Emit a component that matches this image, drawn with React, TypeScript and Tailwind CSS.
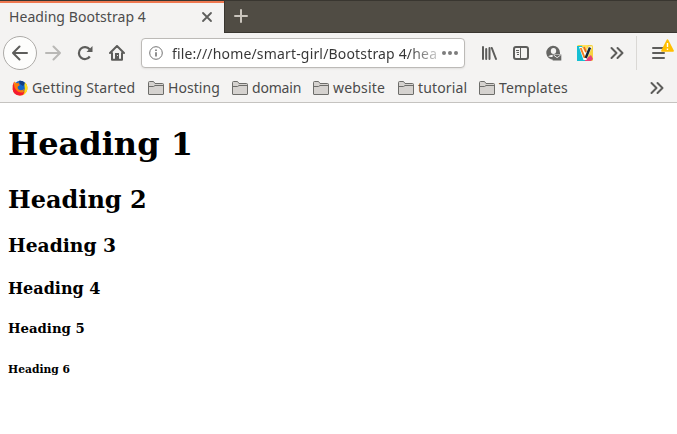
import React from 'react';

const uiFont = "font-['Noto_Sans','Open_Sans',sans-serif]";

function Chevrons() {
  return (
    <svg width="14" height="14" viewBox="0 0 14 14" fill="none" stroke="#5d5d5b" strokeWidth="2" strokeLinecap="round" strokeLinejoin="round">
      <path d="M1.5 2l5 5-5 5M7.5 2l5 5-5 5" />
    </svg>
  );
}

function Folder() {
  return (
    <svg width="16" height="16" viewBox="0 0 16 16" fill="#d5d2cf" stroke="#6d6d6a" className="shrink-0">
      <path d="M.5 14V2.5Q.5 1.5 1.5 1.5H5.5L7 3.5H14.5Q15.5 3.5 15.5 4.5V14Q15.5 14.5 15 14.5H1Q.5 14.5.5 14Z" />
      <path d="M1 6.5H5.5L7 5.5H15" fill="none" />
    </svg>
  );
}

function Firefox() {
  return (
    <svg width="16" height="16" viewBox="0 0 16 16" className="shrink-0">
      <circle cx="8.3" cy="7.4" r="6.6" fill="#1467c8" />
      <path d="M7 .8Q10.5 0 13 3L11 6 8 4Z" fill="#143f83" />
      <path d="M2.2 1.5Q1 4.500 1.500 7.500L4 11.500Q8 14 12 11 14.500 7 13 2.500 16 5.500 15.300 9.500 13.800 15.500 8 15.500 1.600 15.200.7 9.500.3 4.300 2.200 1.500Z" fill="#ff8a00" />
      <path d="M2.200 1.500Q3.600 3 5.200 3.300L6.800 2.600Q6.200 4.200 8 5L5.800 6.500Q5 9.500 8.500 10.300 10.500 10.500 12 9 11.500 12.500 8.500 13 3.500 12.500 2 8.500Z" fill="#ff7a08" />
      <path d="M2.200 1.500Q1.300 6 3.500 9 6 13 10.500 12.500 13 12 13.700 10 13.500 12.800 11 14.700 9 15.700 7.500 15.500 1.500 15 .7 9.500.3 4.300 2.200 1.500Z" fill="#f51a31" />
      <path d="M13 2.500Q16 5.500 15.300 9.500 14.500 13.500 11 14.900 13.300 11.500 12.800 8.500 11.800 5 13 2.500Z" fill="#ffe11b" />
    </svg>
  );
}

const bookmarks = [
  { label: 'Hosting', box: 'w-[84px]', text: 'tracking-[0.05px]' },
  { label: 'domain', box: 'w-[81px]', text: 'tracking-[-0.2px]' },
  { label: 'website', box: 'w-[85px]', text: 'tracking-[0.18px]' },
  { label: 'tutorial', box: 'w-[81px]', text: 'tracking-[0.15px]' },
  { label: 'Templates', box: 'w-[100px]', text: 'tracking-[0.16px]' },
];

function TabBar() {
  return (
    <div className="flex h-[33px] bg-[#504c44]">
      <div className="flex h-[33px] w-[224px] shrink-0 items-center border-t border-[#393630] bg-[#f4f3f2] pr-[11px] pl-[9px] shadow-[inset_0_2px_0_#ef7850]">
        <span className="flex-1 pb-[2px] text-[14px] tracking-[0.06px] whitespace-nowrap text-[#4c4c4c]">Heading Bootstrap 4</span>
        <svg width="12" height="12" viewBox="0 0 12 12" stroke="#5e5e5c" strokeWidth="1.8" strokeLinecap="round">
          <path d="M2 2l8 8M10 2l-8 8" />
        </svg>
      </div>
      <div className="flex flex-1 border-t border-b border-l border-[#393630] pt-[8px] pl-[9px]">
        <svg width="14" height="14" viewBox="0 0 14 14" stroke="#cac5bd" strokeWidth="2" strokeLinecap="round">
          <path d="M7 1v12M1 7h12" />
        </svg>
      </div>
    </div>
  );
}

function Toolbar() {
  return (
    <div className="flex h-10 items-center bg-[#f4f3f2]">
      <div className="ml-[3px] flex size-[34px] shrink-0 items-center justify-center rounded-full border border-[#adaba8] bg-[#fdfdfc]">
        <svg width="16" height="16" viewBox="0 0 16 16" fill="none" stroke="#5d5d5b" strokeWidth="2" strokeLinecap="round" strokeLinejoin="round">
          <path d="M15 8H1M7.5 1.5L1 8l6.5 6.5" />
        </svg>
      </div>
      <svg className="ml-2 shrink-0" width="16" height="16" viewBox="0 0 16 16" fill="none" stroke="#b9b8b6" strokeWidth="2" strokeLinecap="round" strokeLinejoin="round">
        <path d="M1 8h14M8.5 1.5L15 8l-6.5 6.5" />
      </svg>
      <svg className="ml-4 shrink-0" width="16" height="16" viewBox="0 0 16 16" fill="none" stroke="#5d5d5b" strokeWidth="2.2">
        <path d="M12.8 11.5A6 6 0 1 1 12.6 4.3" />
        <path d="M15.5 1v6h-6z" fill="#5d5d5b" stroke="none" />
      </svg>
      <svg className="ml-4 shrink-0" width="16" height="16" viewBox="0 0 16 16" fill="none" stroke="#5d5d5b" strokeWidth="2" strokeLinecap="round" strokeLinejoin="round">
        <path d="M1 8L8 1l7 7M3 8v6.7h10V8" />
        <path d="M6 14V8h4v6z" fill="#5d5d5b" stroke="none" />
        <path d="M8.5 10.5h.1" stroke="#f4f3f2" strokeWidth="1" />
      </svg>
      <div className="ml-4 flex h-[30px] w-[324px] shrink-0 items-center rounded-[4px] border border-[#bcbab7] bg-white pl-[7px] shadow-[0_1px_2px_rgba(0,0,0,0.08)]">
        <svg width="14" height="14" viewBox="0 0 14 14" className="shrink-0" fill="none" stroke="#737373">
          <circle cx="7" cy="7" r="6.3" />
          <path d="M7 6.2V10.5M7 3.5V5" strokeWidth="1.6" />
        </svg>
        <span className="mt-px ml-[9px] w-[266px] shrink-0 bg-[linear-gradient(90deg,#353535_89%,transparent_103%)] bg-clip-text text-[14px] leading-5 tracking-[0.17px] whitespace-nowrap text-transparent">file:///home/smart-girl/Bootstrap 4/hea</span>
        <svg width="16" height="4" viewBox="0 0 16 4" fill="#7d7d7d" className="ml-[4px] shrink-0">
          <circle cx="2" cy="2" r="2" /><circle cx="8" cy="2" r="2" /><circle cx="14" cy="2" r="2" />
        </svg>
      </div>
      <svg className="ml-4 shrink-0" width="16" height="16" viewBox="0 0 16 16" fill="none" stroke="#5d5d5b" strokeWidth="2" strokeLinecap="round">
        <path d="M2 2v12M5.2 4v10M8.5 3v11M10.8 3L15 14" />
      </svg>
      <svg className="ml-4 shrink-0" width="16" height="16" viewBox="0 0 16 16" fill="none" stroke="#5d5d5b">
        <rect x="1" y="2" width="14" height="12" rx="2" strokeWidth="2" />
        <path d="M7.5 3v10" strokeWidth="1" /><path d="M3 5.5h3M3.5 7.5h2.5M4 9.5h2" />
      </svg>
      <svg className="ml-4 shrink-0" width="17" height="16" viewBox="0 0 17 16">
        <path d="M7.8.8a7 7 0 1 0 1 14V9H15V8A7 7 0 0 0 7.800.8Z" fill="#666664" />
        <ellipse cx="8.500" cy="6" rx="2.700" ry="3" fill="#f4f3f2" />
        <path d="M3.200 11.300Q5 9.800 8 9.700V11.800Q5 12.500 3.200 11.300Z" fill="#f4f3f2" />
        <path d="M7.700 9.500h8.600v6H7.700z" fill="#666664" />
        <path d="M8.500 10l3.600 2.700 3.600-2.700" fill="none" stroke="#f4f3f2" strokeWidth=".9" />
      </svg>
      <svg className="ml-[15px] shrink-0" width="16" height="16" viewBox="0 0 16 16">
        <rect width="16" height="16" rx="1.5" fill="#f7d341" />
        <path d="M0 1h5l4 15H0z" fill="#15bfd3" />
        <path d="M5 0h6L8 9z" fill="#ffe15b" />
        <path d="M8 15l6-5 2 4-2 2H8z" fill="#e9437b" />
        <path d="M2 2h3l3.500 6L11.500 1.500h3.700L9.500 15H6.500z" fill="#fff" />
        <path d="M3.700 3L7.700 13" stroke="#f38122" strokeWidth="2" />
        <path d="M13 2.500L8.700 13" stroke="#182635" strokeWidth="2.500" />
        <path d="M7 2l2 5" stroke="#ed6a24" strokeWidth="1.800" />
      </svg>
      <div className="ml-[17px] shrink-0"><Chevrons /></div>
      <div className="ml-3 h-[34px] w-px shrink-0 bg-[#dad8d5]" />
      <div className="relative ml-[15px] h-4 w-[24px] shrink-0">
        <svg width="14" height="16" viewBox="0 0 14 16" stroke="#5d5d5b" strokeWidth="2" strokeLinecap="round">
          <path d="M1 3h11M1 8h11M1 13h11" />
        </svg>
        <svg className="absolute -top-[6px] left-[9px]" width="13" height="13" viewBox="0 0 13 13">
          <path d="M6.5 1.2L12 11.8H1Z" fill="#ffbf00" stroke="#ffbf00" strokeWidth="1.8" strokeLinejoin="round" />
          <path d="M6.5 4v4M6.5 9.5V11" stroke="#fff" strokeWidth="1.4" />
        </svg>
      </div>
    </div>
  );
}

function Bookmarks() {
  return (
    <div className="flex h-[30px] items-center border-b border-[#c5c3c0] bg-[#f4f3f2] pl-3 text-[14px] text-[#4b4b4b]">
      <div className="flex w-[136px] shrink-0 items-center gap-1">
        <Firefox /><span className="tracking-[0.18px] whitespace-nowrap">Getting Started</span>
      </div>
      {bookmarks.map(({ label, box, text }) => (
        <div key={label} className={`flex shrink-0 items-center gap-1 ${box}`}>
          <Folder /><span className={`whitespace-nowrap ${text}`}>{label}</span>
        </div>
      ))}
      <div className="mr-[13px] ml-auto shrink-0"><Chevrons /></div>
    </div>
  );
}

export default function App() {
  return (
    <div className="h-[434px] w-[677px] overflow-hidden bg-white">
      <header className={uiFont}>
        <TabBar />
        <Toolbar />
        <Bookmarks />
      </header>
      <main className="flow-root px-2 font-['DejaVu_Serif',serif] leading-[normal] text-black">
        <h1 className="mt-[22px] text-[32px] font-bold">Heading 1</h1>
        <h2 className="mt-[21.5px] text-[24px] font-bold">Heading 2</h2>
        <h3 className="mt-[20px] text-[18.72px] font-bold">Heading 3</h3>
        <h4 className="mt-[23px] text-[16px] font-bold">Heading 4</h4>
        <h5 className="mt-[23px] text-[13.28px] font-bold">Heading 5</h5>
        <h6 className="mt-[27px] text-[10.72px] font-bold">Heading 6</h6>
      </main>
    </div>
  );
}
